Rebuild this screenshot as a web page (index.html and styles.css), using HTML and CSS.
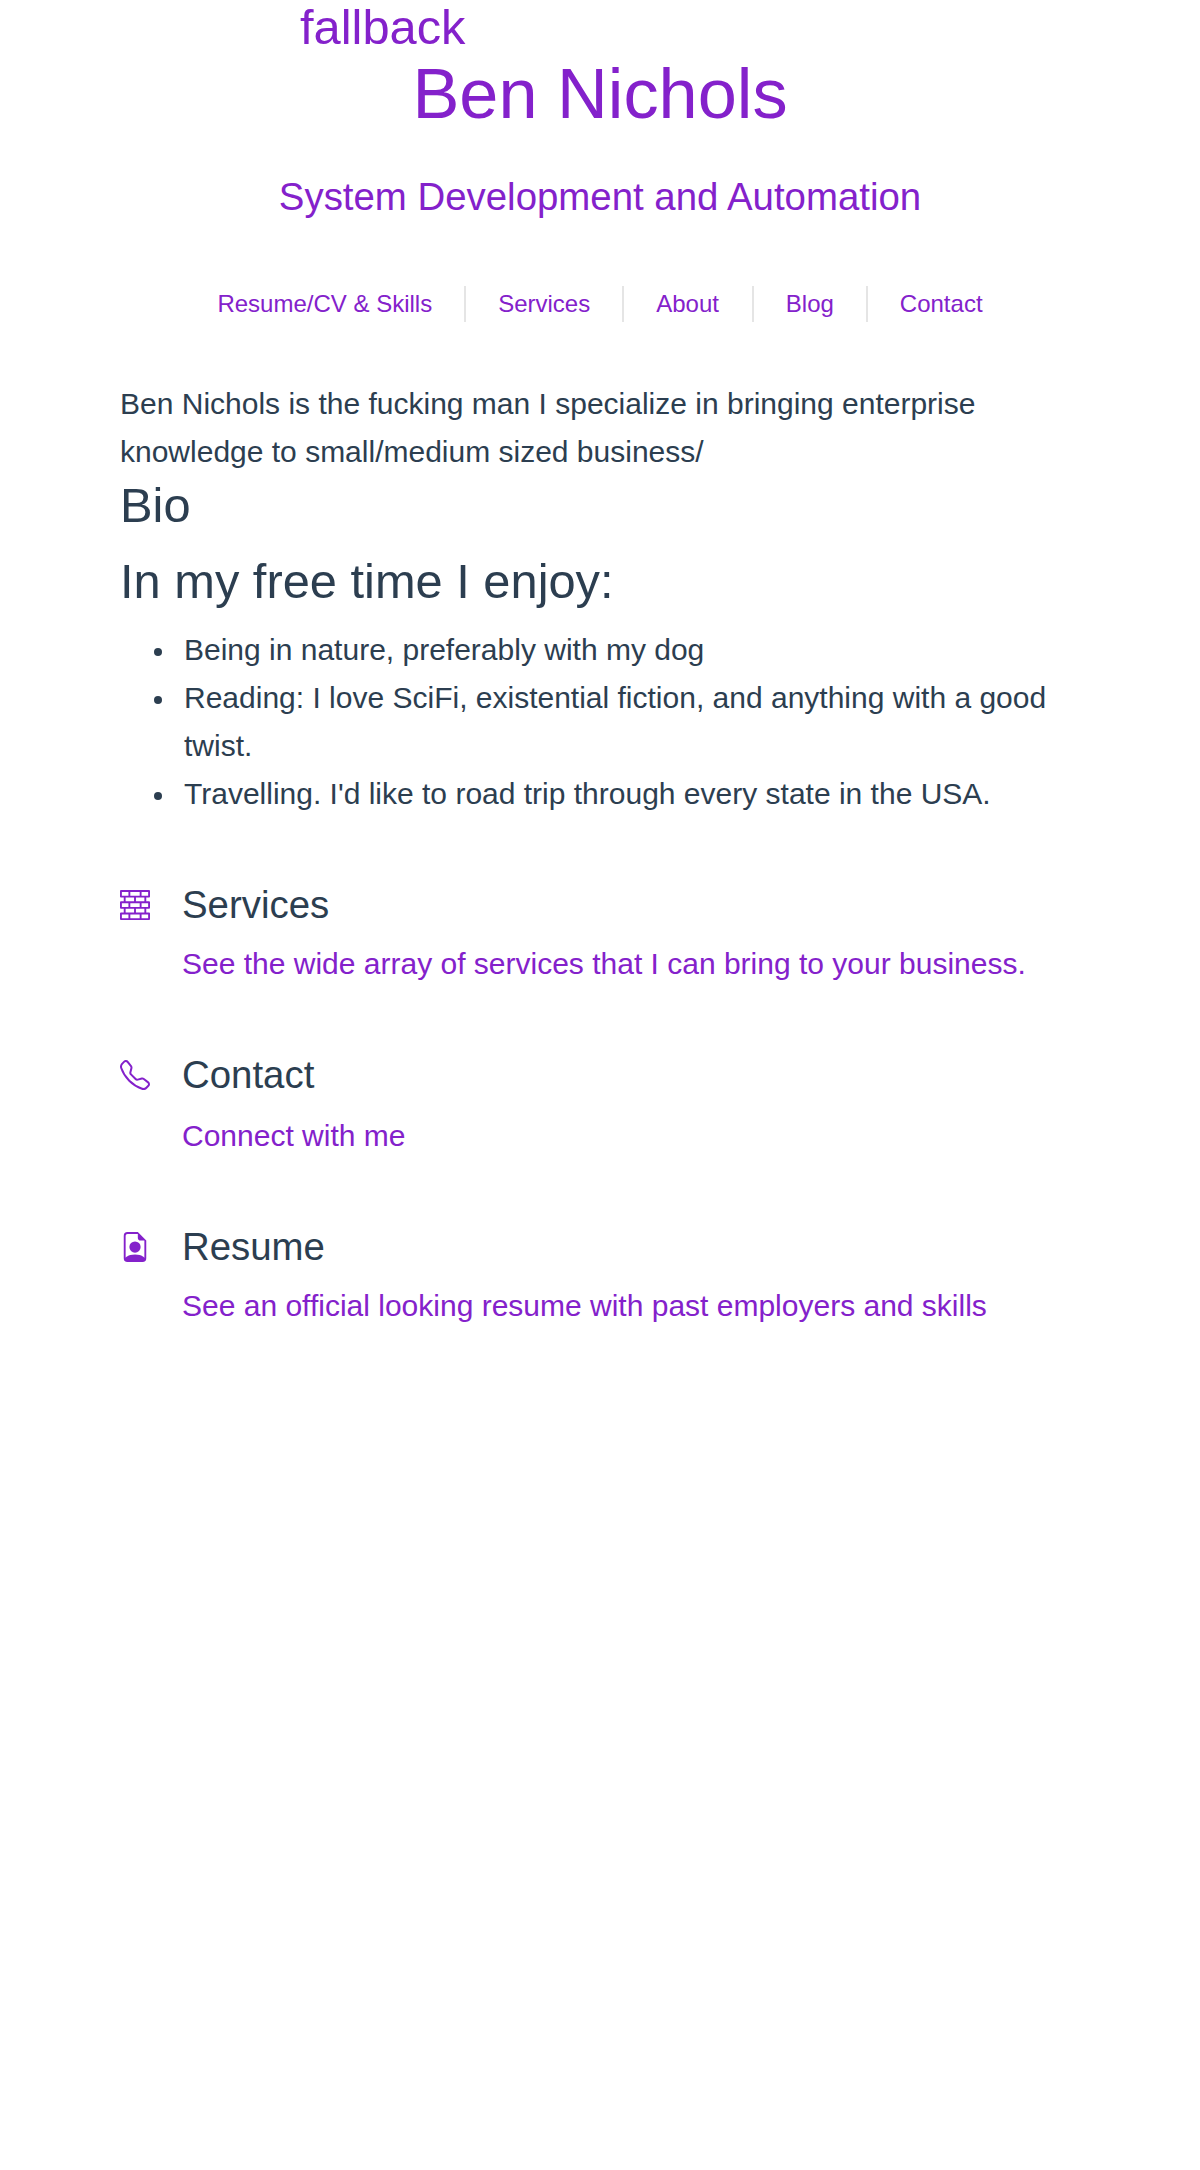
FILE: index.html
```html
<!DOCTYPE html>
<html lang="en">
<head>
<meta charset="utf-8">
<title>Ben Nichols</title>
<link rel="stylesheet" href="styles.css">
</head>
<body>
<header>
  <a class="logo" href="#">fallback</a>
  <h1>Ben Nichols</h1>
  <h2>System Development and Automation</h2>
  <nav>
    <a href="#">Resume/CV &amp; Skills</a>
    <a href="#">Services</a>
    <a class="about" href="#">About</a>
    <a href="#">Blog</a>
    <a href="#">Contact</a>
  </nav>
</header>
<main>
  <p>Ben Nichols is the fucking man I specialize in bringing enterprise knowledge to small/medium sized business/</p>
  <h3 class="bio">Bio</h3>
  <h3 class="free">In my free time I enjoy:</h3>
  <ul>
    <li>Being in nature, preferably with my dog</li>
    <li>Reading: I love SciFi, existential fiction, and anything with a good twist.</li>
    <li>Travelling. I'd like to road trip through every state in the USA.</li>
  </ul>
  <section class="item">
    <svg viewBox="0 0 16 16"><path d="M0 .5A.5.5 0 0 1 .5 0h15a.5.5 0 0 1 .5.5v3a.5.5 0 0 1-.5.5H14v2h1.5a.5.5 0 0 1 .5.5v3a.5.5 0 0 1-.5.5H14v2h1.5a.5.5 0 0 1 .5.5v3a.5.5 0 0 1-.5.5H.5a.5.5 0 0 1-.5-.5v-3a.5.5 0 0 1 .5-.5H2v-2H.5a.5.5 0 0 1-.5-.5v-3A.5.5 0 0 1 .5 6H2V4H.5a.5.5 0 0 1-.5-.5v-3zM3 4v2h4.5V4H3zm5.5 0v2H13V4H8.5zM3 10v2h4.5v-2H3zm5.5 0v2H13v-2H8.5zM1 1v2h3.5V1H1zm4.5 0v2h5V1h-5zm6 0v2H15V1h-3.5zM1 7v2h3.5V7H1zm4.5 0v2h5V7h-5zm6 0v2H15V7h-3.5zM1 13v2h3.5v-2H1zm4.5 0v2h5v-2h-5zm6 0v2H15v-2h-3.5z"/></svg>
    <div><h4>Services</h4><a href="#">See the wide array of services that I can bring to your business.</a></div>
  </section>
  <section class="item contact">
    <svg viewBox="0 0 16 16"><path d="M3.654 1.328a.678.678 0 0 0-1.015-.063L1.605 2.3c-.483.484-.661 1.169-.45 1.77a17.568 17.568 0 0 0 4.168 6.608 17.569 17.569 0 0 0 6.608 4.168c.601.211 1.286.033 1.77-.45l1.034-1.034a.678.678 0 0 0-.063-1.015l-2.307-1.794a.678.678 0 0 0-.58-.122l-2.19.547a1.745 1.745 0 0 1-1.657-.459L5.482 8.062a1.745 1.745 0 0 1-.46-1.657l.548-2.19a.678.678 0 0 0-.122-.58L3.654 1.328zM1.884.511a1.745 1.745 0 0 1 2.612.163L6.29 2.98c.329.423.445.974.315 1.494l-.547 2.19a.678.678 0 0 0 .178.643l2.457 2.457a.678.678 0 0 0 .644.178l2.189-.547a1.745 1.745 0 0 1 1.494.315l2.306 1.794c.829.645.905 1.87.163 2.611l-1.034 1.034c-.74.74-1.846 1.065-2.877.702a18.634 18.634 0 0 1-7.01-4.42 18.634 18.634 0 0 1-4.42-7.009c-.362-1.03-.037-2.137.703-2.877L1.885.511z"/></svg>
    <div><h4>Contact</h4><a href="#">Connect with me</a></div>
  </section>
  <section class="item">
    <svg viewBox="0 0 16 16"><path d="M11 8a3 3 0 1 1-6 0 3 3 0 0 1 6 0z"/><path d="M14 14V4.5L9.5 0H4a2 2 0 0 0-2 2v12a2 2 0 0 0 2 2h8a2 2 0 0 0 2-2zM9.5 3A1.5 1.5 0 0 0 11 4.5h2v9.255S12 12 8 12s-5 1.755-5 1.755V2a1 1 0 0 1 1-1h5.5v2z"/></svg>
    <div><h4>Resume</h4><a href="#">See an official looking resume with past employers and skills</a></div>
  </section>
</main>
</body>
</html>
```
FILE: styles.css
```css
* { box-sizing: border-box; }
body { margin: 0; background: #fff; color: #2c3e50; font: 30px/48px "Liberation Sans", Arial, sans-serif; }
h1, h2, h3, h4, p { margin: 0; font-weight: 400; }
a { color: #8421cb; text-decoration: none; }
header { display: flow-root; color: #8421cb; text-align: center; }
.logo { display: block; width: 600px; margin: -1px auto 0; text-align: left; font-size: 48.8px; line-height: 56px; }
h1 { font-size: 70.3px; line-height: 77px; }
h2 { margin-top: 41px; font-size: 38.4px; line-height: 48px; }
nav { display: flex; justify-content: center; margin-top: 65px; }
nav a { font-size: 24px; line-height: 36px; padding: 0 32px; white-space: nowrap; border-right: 2px solid #e5e5e5; }
nav .about { padding-right: 32.9px; }
nav a:last-child { border: 0; }
main { width: 960px; margin: 58px auto 0; }
h3 { font-size: 48.8px; line-height: 58px; }
.free { margin-top: 18px; }
ul { margin: 16px 0 0; padding-left: 64px; list-style: none; }
li::before { content: ""; display: inline-block; width: 8.5px; height: 8.5px; margin: 0 21.8px 0 -30.3px; border-radius: 50%; background: currentColor; vertical-align: 4px; }
.item { display: flex; gap: 32px; margin-top: 63px; }
.item svg { width: 30px; height: 30px; margin-top: 9px; fill: #8421cb; }
.item a { display: block; }
h4 { font-size: 38.4px; line-height: 48px; margin-bottom: 11px; }
.contact h4 { margin-bottom: 13px; }
```
